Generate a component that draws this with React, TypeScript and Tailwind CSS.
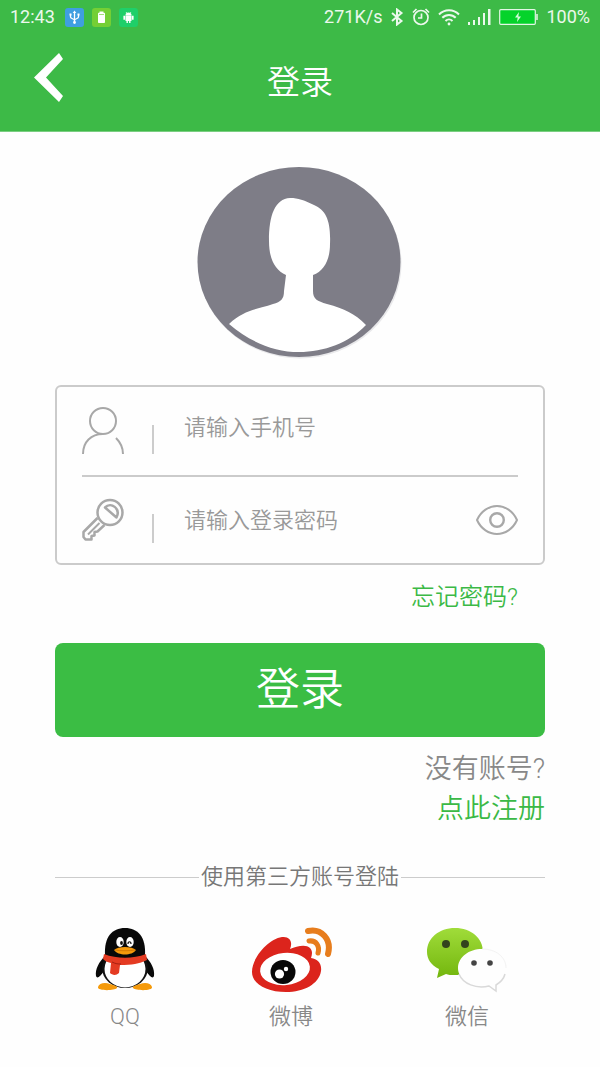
import { useState } from "react";

const fontClasses = "font-[Roboto,'Noto_Sans_CJK_SC',sans-serif]";

function StatusBar() {
  return (
    <div className="flex h-[34px] items-center justify-between px-[10px] text-lg leading-6 text-white/90">
      <div className="flex items-center gap-2">
        <span className="pr-0.5">12:43</span>
        {/* USB */}
        <svg width="19" height="19" viewBox="0 0 19 19" fill="none">
          <rect width="19" height="19" rx="3" fill="#3f9fe0" />
          <path d="M9.500 4v10M5.500 6.500v2.500c0 2 4 1.500 4 3.500M13.500 6.500v2.500c0 2-4 1.500-4 3.500" stroke="#fff" strokeWidth="1.300" />
          <path d="M9.500 2.500l1.800 2.500H7.700z" fill="#fff" />
          <circle cx="9.500" cy="14.500" r="1.400" fill="#fff" />
          <path d="M4.500 5.500h2v2h-2zM12.500 5.500h2v2h-2z" fill="#fff" />
        </svg>
        {/* Battery */}
        <svg width="19" height="19" viewBox="0 0 19 19">
          <rect width="19" height="19" rx="3" fill="#74cf35" />
          <path d="M7.500 3.500h4v1.300H12c.5 0 1 .4 1 1V14c0 .6-.5 1-1 1H7c-.5 0-1-.4-1-1V5.800c0-.6.5-1 1-1h.5z" fill="#fff" />
          <path d="M7 6.500h5" stroke="#a5df7c" />
        </svg>
        {/* Android */}
        <svg width="19" height="19" viewBox="0 0 19 19">
          <rect width="19" height="19" rx="3" fill="#1fcf69" />
          <path d="M6.500 7.200a3 2.700 0 0 1 6 0zM6.500 7.500h6V13h-1v2h-1.400v-2H8.900v2H7.500v-2h-1zM4.400 7.800h1.700v4H4.400zM12.900 7.800h1.700v4h-1.700z" fill="#fff" />
          <path d="M7 4l1 1.300M12 4l-1 1.300" stroke="#fff" strokeWidth=".7" />
        </svg>
      </div>

      <div className="flex items-center gap-2">
        <span>271K/s</span>
        <svg width="14" height="18" viewBox="0 0 14 18" fill="none" stroke="currentColor" strokeWidth="2">
          <path d="M2 5l9.500 8L7 16.500v-15L11.500 5 2 13" />
        </svg>
        <svg width="18" height="18" viewBox="0 0 18 18" fill="none" stroke="currentColor" strokeWidth="1.700">
          <circle cx="9" cy="9.500" r="7" />
          <path d="M9.500 5.500V10H6M1 4.500L4.500 1M17 4.500L13.500 1" />
        </svg>
        <svg width="22" height="18" viewBox="0 0 22 18" fill="none" stroke="currentColor" strokeWidth="2">
          <path d="M1 6.500c5.500-5.600 14.500-5.600 20 0M4.300 9.800c3.700-3.800 9.700-3.800 13.400 0M7.500 13c2-2 5-2 7 0" />
          <circle cx="11" cy="16" r="1.400" fill="currentColor" stroke="none" />
        </svg>
        <svg width="23" height="18" viewBox="0 0 23 18" fill="currentColor">
          <path d="M0 14h2v3H0zM5 12h2v5H5zM10 9h2v8h-2zM15 5h2v12h-2zM20 1h2.500v16H20z" />
        </svg>
        <svg width="39" height="16" viewBox="0 0 39 16">
          <rect x=".7" y=".7" width="35.600" height="14.600" rx="1" fill="#05d32b" stroke="#e4f7e5" strokeWidth="1.200" />
          <path d="M38 5v6" stroke="#e4f7e5" strokeWidth="1.500" />
          <path d="M20 3l-4 5.500h2.700L18 13l4-5.500h-2.700z" fill="#d8fbdc" />
        </svg>
        <span>100%</span>
      </div>
    </div>
  );
}

function Avatar() {
  return (
    <svg width="208" height="196" viewBox="0 0 208 196" className="mx-auto" role="img" aria-label="头像">
      <ellipse cx="104" cy="99" rx="101.500" ry="94.500" fill="#e9e9eb" />
      <ellipse cx="103" cy="97" rx="101.500" ry="95" fill="#7e7d87" />
      <path
        d="M94 33C79 34 73 50 73 76c0 18 6 29 17 34l-2 16c0 8-3 11-11 13-18 6-29 6-44 20C54 177 78 187 103 187s50-9 67-27c-12-12-21-16-39-21-10-3-14-5-14-13v-16c11-4 17-15 17-31 1-23-4-34-16-39-11-5-15-7-24-7z"
        fill="#fff"
      />
    </svg>
  );
}

function UserIcon() {
  return (
    <svg width="42" height="48" viewBox="0 0 42 48" fill="none" stroke="#a8a8a8" strokeWidth="2">
      <circle cx="21" cy="14" r="13" />
      <path d="M1 47c0-12 8-20 20-20M34 31c4 4 7 9 7 16" />
    </svg>
  );
}

function KeyIcon() {
  return (
    <svg width="42" height="44" viewBox="0 0 42 44" fill="none" stroke="#a8a8a8" strokeWidth="2.500" strokeLinejoin="round">
      <circle cx="28" cy="14.500" r="12.500" />
      <path d="M23 9.500c6-6 16 1 11.500 10z" />
      <path d="M15.500 20L1.500 34v5l2 2.500h6V38l3-.5V34l3-.5L22.500 27" />
      <path d="M17.500 25L6 36.500" strokeWidth="2" />
    </svg>
  );
}

function EyeIcon() {
  return (
    <svg width="42" height="32" viewBox="0 0 42 32" fill="none" stroke="#a8a8a8" strokeWidth="2">
      <path d="M1 16C5 7 13 2 21 2s16 5 20 14c-4 9-12 14-20 14S5 25 1 16z" strokeLinejoin="round" />
      <circle cx="21" cy="16" r="6.800" strokeWidth="2.400" />
    </svg>
  );
}

function QQIcon() {
  return (
    <svg width="60" height="66" viewBox="0 0 60 66">
      <path d="M10 29C4 35 0 42 1 49c1 3 4 1 8-5zM50 29c6 6 10 13 9 20-1 3-4 1-8-5z" fill="#090909" />
      <ellipse cx="30" cy="41" rx="23" ry="20" fill="#111" />
      <ellipse cx="30" cy="42" rx="20.500" ry="18.500" fill="#fff" />
      <path d="M10 28C9 10 17 1 30 1s21 9 20 27c-8 7-32 7-40 0z" fill="#090909" />
      <path d="M3 60c1-4 7-5 12-3 5 1 8 3 7 4-3 3-20 3-19-1zM57 60c-1-4-7-5-12-3-5 1-8 3-7 4 3 3 20 3 19-1z" fill="#f59a0b" />
      <path d="M9 27c13 5 29 5 42 0l1 6c-8 4-15 5-27 5l-1 8c-3 3-7 2-9 0l1-10c-4-1-6-2-8-4z" fill="#e43b22" />
      <path d="M17 35c4 2 6 2 9 2" stroke="#a61f10" fill="none" />
      <ellipse cx="25" cy="15" rx="3.700" ry="5" fill="#fff" />
      <ellipse cx="35" cy="15" rx="3.700" ry="5" fill="#fff" />
      <ellipse cx="26.500" cy="16" rx="1.400" ry="2" fill="#111" />
      <path d="M33 17c0-3 3-3 3 0" stroke="#111" fill="none" strokeWidth="1.200" />
      <path d="M19 23c4-4 18-4 22 0-4 6-18 6-22 0z" fill="#f59a0b" />
      <path d="M20 23c5 1 15 1 20 0" stroke="#c96e00" strokeWidth=".7" fill="none" />
    </svg>
  );
}

function WeiboIcon() {
  return (
    <svg width="81" height="66" viewBox="0 0 81 66">
      <path
        d="M1 45C1 31 17 12 31 10c8-1 11 5 8 12 7-3 16-5 20-1 3 3 2 7 1 10 7 1 11 6 10 13-2 13-17 21-35 21C16 65 1 57 1 45z"
        fill="#dc241c"
      />
      <ellipse cx="34" cy="42" rx="25" ry="16" transform="rotate(-6 34 42)" fill="#fff" />
      <ellipse cx="32" cy="45" rx="12.500" ry="12" fill="#080808" />
      <circle cx="28.500" cy="47" r="4.600" fill="#fff" />
      <circle cx="35" cy="42" r="2.200" fill="#fff" />
      <g fill="none" stroke="#e77d1d" strokeLinecap="round">
        <path d="M57 4c13-3 24 8 20 23" strokeWidth="6" />
        <path d="M58 14c7-1 11 5 9 12" strokeWidth="5" />
      </g>
    </svg>
  );
}

function WechatIcon() {
  return (
    <svg width="80" height="66" viewBox="0 0 80 66">
      <defs>
        <linearGradient id="bubble" x1="0" y1="0" x2="0" y2="1">
          <stop offset="0" stopColor="#a0dc3a" />
          <stop offset="1" stopColor="#73b60d" />
        </linearGradient>
      </defs>
      <path d="M28 1c16 0 28 10 28 24S44 48 28 48c-4 0-7 0-9-1l-9 4 2-9C4 38 0 32 0 25 0 11 12 1 28 1z" fill="url(#bubble)" />
      <path d="M55 22c14 0 24 8 24 19 0 7-4 12-10 16v7l-7-5c-17 3-31-6-31-18 0-11 11-19 24-19z" fill="#fefefe" />
      <path d="M32 47c4 10 17 15 30 12l7 5v-6c5-3 8-7 9-11" fill="none" stroke="#d9d9d9" strokeWidth="1.500" />
      <path d="M55 22c14 0 24 8 24 19" fill="none" stroke="#f3f3f3" />
      <circle cx="19" cy="17" r="4" fill="#33451d" />
      <circle cx="38" cy="17" r="4" fill="#33451d" />
      <circle cx="47" cy="36" r="2.800" fill="#444" />
      <circle cx="63" cy="36" r="2.800" fill="#444" />
    </svg>
  );
}

const providers = [
  { name: "QQ", icon: <QQIcon /> },
  { name: "微博", icon: <WeiboIcon /> },
  { name: "微信", icon: <WechatIcon /> },
];

export default function App() {
  const [showPassword, setShowPassword] = useState(false);

  const inputClasses =
    "ml-[30px] h-10 min-w-0 flex-1 bg-transparent text-[22px] font-[350] text-[#777] outline-none placeholder:text-[#999]";

  return (
    <div className={`min-h-screen bg-[#fefefe] ${fontClasses}`}>
      <header className="border-b border-[#7ace81] bg-[#3dba47] text-white">
        <StatusBar />
        <div className="flex h-[97px] items-center px-[34px]">
          <div className="flex flex-1">
            <button type="button" aria-label="返回">
              <svg width="30" height="60" viewBox="0 0 30 60" fill="#fff">
                <path d="M25 0l4 6-17 18.500L29 43l-4 6L0 24.500z" />
              </svg>
            </button>
          </div>
          <h1 className="text-[33px] leading-10 font-[350]">登录</h1>
          <div className="flex-1" />
        </div>
      </header>

      <main className="px-[55px] pt-[33px]">
        <Avatar />

        <form onSubmit={(e) => e.preventDefault()}>
          <div className="mt-6 rounded-md border-2 border-[#cbcbcb] px-[25px]">
            <div className="flex h-[90px] items-center border-b-2 border-[#cbcbcb]">
              <UserIcon />
              <span className="mt-4 ml-7 h-[29px] w-0.5 bg-[#ccc]" />
              <input type="tel" aria-label="手机号" placeholder="请输入手机号" className={`${inputClasses} mb-2`} />
            </div>
            <div className="flex h-[86px] items-center">
              <KeyIcon />
              <span className="mt-4 ml-7 h-[29px] w-0.5 bg-[#ccc]" />
              <input
                type={showPassword ? "text" : "password"}
                aria-label="登录密码"
                placeholder="请输入登录密码"
                className={inputClasses}
              />
              <button type="button" aria-label="显示密码" onClick={() => setShowPassword(!showPassword)}>
                <EyeIcon />
              </button>
            </div>
          </div>

          <div className="mt-3 flex justify-end pr-[27px]">
            <a href="#forgot" className="text-2xl leading-10 font-[350] text-[#3bb946]">
              忘记密码?
            </a>
          </div>

          <button
            type="submit"
            className="mt-[26px] h-[94px] w-full rounded-lg bg-[#3bbd44] text-[44px] leading-none font-[350] text-white"
          >
            登录
          </button>
        </form>

        <div className="mt-3 flex flex-col items-end text-[27px] leading-10 font-[350]">
          <span className="text-[#888]">没有账号?</span>
          <a href="#register" className="text-[#3bb946]">
            点此注册
          </a>
        </div>

        <div className="mt-8 flex items-center gap-[2px]">
          <span className="h-px flex-1 bg-[#ccc]" />
          <h2 className="text-[22px] leading-8 font-[350] text-[#777]">使用第三方账号登陆</h2>
          <span className="h-px flex-1 bg-[#ccc]" />
        </div>

        <div className="mt-[34px] flex justify-between pr-[38px] pl-10">
          {providers.map((p) => (
            <button key={p.name} type="button" className="flex flex-col items-center gap-2">
              {p.icon}
              <span className="text-[22px] leading-8 font-[350] text-[#888]">{p.name}</span>
            </button>
          ))}
        </div>
      </main>
    </div>
  );
}
